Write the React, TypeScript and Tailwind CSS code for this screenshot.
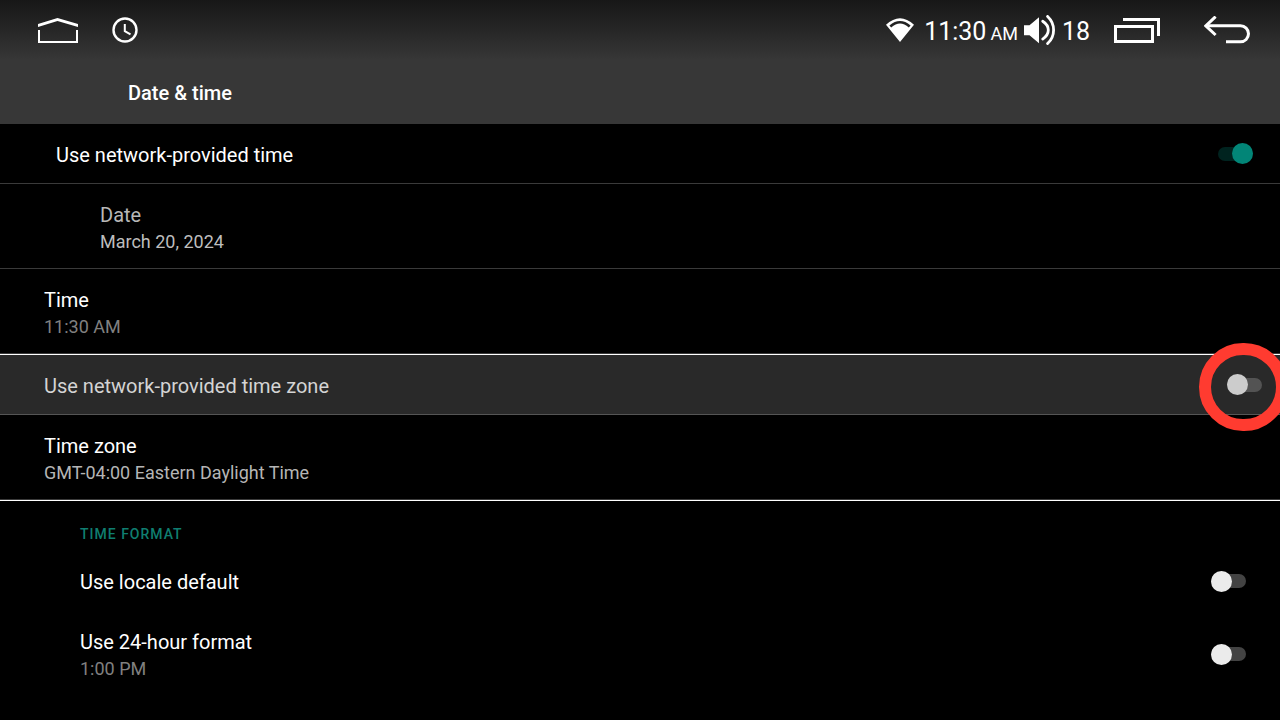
import { useId, useState } from 'react';

function HomeIcon() {
  return (
    <svg width="40" height="25" viewBox="0 0 40 25" fill="none" aria-hidden="true">
      <path d="M0 6 19.5 0 40 6v3L19.5 3 0 9z" fill="currentColor" />
      <path d="M1 12v12h38V12" stroke="currentColor" strokeWidth="2" />
    </svg>
  );
}

function ClockIcon() {
  return (
    <svg width="26" height="26" viewBox="0 0 26 26" fill="none" stroke="currentColor" aria-hidden="true">
      <circle cx="13" cy="13" r="11.5" strokeWidth="2.4" />
      <path d="M12.8 7v7.2l5.7 3.2" strokeWidth="2" />
    </svg>
  );
}

function WifiIcon() {
  return (
    <svg width="28" height="24" viewBox="0 0 28 24" fill="currentColor" fillRule="evenodd" aria-hidden="true">
      <path d="M14 24 0 6.8Q14 -6.2 28 6.8zM3.4 7.4l1.8 2.2Q14 1.6 22.8 9.6l1.8-2.2Q14 -1.2 3.4 7.4z" />
    </svg>
  );
}

function SpeakerIcon() {
  return (
    <svg width="32" height="30" viewBox="0 0 32 30" fill="none" aria-hidden="true">
      <path d="M0 10.3h5.5l9.5-8v26l-9.5-8H0z" fill="currentColor" />
      <g stroke="currentColor" strokeWidth="2.8" strokeLinecap="round">
        <path d="M18.7 6.2q5.6 3.6 5.6 8.9t-5.6 9" />
        <path d="M23.6 1.4q6 5.6 6 13.6t-6 13.6" />
      </g>
    </svg>
  );
}

function RecentsIcon() {
  return (
    <svg width="46" height="25" viewBox="0 0 46 25" fill="none" stroke="currentColor" strokeWidth="3" aria-hidden="true">
      <path d="M1.5 8.5h37v15h-37zM9 1.5h35.5V18" />
    </svg>
  );
}

function BackIcon() {
  return (
    <svg width="47" height="28" viewBox="0 0 47 28" fill="none" stroke="currentColor" strokeWidth="3" aria-hidden="true">
      <path d="M11.6 .6 1.8 9.8l9.8 9.2" />
      <path d="M2 9.8h34.5a8 8 0 0 1 0 16H22" />
    </svg>
  );
}

function StatusBar() {
  return (
    <nav className="flex h-[60px] items-center justify-between bg-linear-to-b from-[#171717] to-[#373737] pr-[29px] pl-[38px]">
      <div className="flex items-center gap-[34px]">
        <button type="button" aria-label="Home">
          <HomeIcon />
        </button>
        <ClockIcon />
      </div>
      <div className="flex items-center">
        <WifiIcon />
        <p className="ml-[10px] flex items-baseline gap-1 pt-1 text-[25px] leading-8">
          11:30 <span className="text-lg leading-none">AM</span>
        </p>
        <div className="ml-1.5 flex items-center gap-1.5 text-[25px] leading-8">
          <SpeakerIcon />
          <span className="pt-1">18</span>
        </div>
        <button type="button" aria-label="Recent apps" className="ml-6">
          <RecentsIcon />
        </button>
        <button type="button" aria-label="Back" className="ml-11">
          <BackIcon />
        </button>
      </div>
    </nav>
  );
}

interface ToggleRowProps {
  label: string;
  summary?: string;
  defaultOn?: boolean;
  dimmed?: boolean;
  className: string;
}

function ToggleRow({ label, summary, defaultOn = false, dimmed = false, className }: ToggleRowProps) {
  const id = useId();
  const [on, setOn] = useState(defaultOn);

  return (
    <div className={`flex items-center justify-between ${className}`}>
      <label htmlFor={id} className="pt-0.5 text-xl leading-7">
        {label}
        {summary && <span className="block text-lg leading-[26px] text-[#808080]">{summary}</span>}
      </label>
      <input
        id={id}
        type="checkbox"
        role="switch"
        checked={on}
        onChange={(e) => setOn(e.target.checked)}
        className={`flex h-[14px] w-[35px] shrink-0 appearance-none items-center rounded-full before:size-[21px] before:shrink-0 before:rounded-full checked:justify-end checked:bg-[#00231f] checked:before:bg-[#028577] ${
          dimmed ? 'bg-[#535353] before:bg-[#cccccc]' : 'bg-[#434343] before:bg-[#ebebeb]'
        }`}
      />
    </div>
  );
}

interface ValueRowProps {
  label: string;
  value: string;
  className: string;
  valueClass: string;
}

function ValueRow({ label, value, className, valueClass }: ValueRowProps) {
  return (
    <button type="button" className={`block w-full border-b border-[#3a3a3a] pt-[17px] pb-[13px] text-left ${className}`}>
      <span className="block text-xl leading-7">{label}</span>
      <span className={`block text-lg leading-[26px] ${valueClass}`}>{value}</span>
    </button>
  );
}

export default function App() {
  return (
    <div className="min-h-screen overflow-hidden bg-black font-['Roboto',sans-serif] text-white">
      <header className="bg-[#373737]">
        <StatusBar />
        <h1 className="flex h-16 items-center pt-0.5 pl-32 text-xl font-medium">Date &amp; time</h1>
      </header>

      <main>
        <ToggleRow label="Use network-provided time" defaultOn className="h-[60px] border-b border-[#3a3a3a] pr-[27px] pl-14" />
        <ValueRow label="Date" value="March 20, 2024" className="pl-[100px] text-[#b8b8b8]" valueClass="text-[#bdbdbd]" />
        <ValueRow label="Time" value="11:30 AM" className="pl-11" valueClass="text-[#808080]" />

        <div className="relative border-t border-white">
          <ToggleRow
            label="Use network-provided time zone"
            dimmed
            className="h-[60px] border-b border-[#555555] bg-[#292929] pr-[18px] pl-11 text-[#d4d4d4]"
          />
          <div
            aria-hidden="true"
            className="pointer-events-none absolute -top-3 -right-2 h-[88px] w-[89px] rounded-full border-[12px] border-[#ff3b30]"
          />
        </div>

        <ValueRow label="Time zone" value="GMT-04:00 Eastern Daylight Time" className="pl-11" valueClass="text-[#b5b5b5]" />

        <section className="border-t border-white pt-[23px]">
          <h2 className="pl-20 text-sm font-medium tracking-[1px] text-[#0f7e70]">TIME FORMAT</h2>
          <ToggleRow label="Use locale default" className="mt-[7px] h-[60px] pr-[34px] pl-20" />
          <ToggleRow label="Use 24-hour format" summary="1:00 PM" className="h-[86px] pr-[34px] pl-20" />
        </section>
      </main>
    </div>
  );
}
